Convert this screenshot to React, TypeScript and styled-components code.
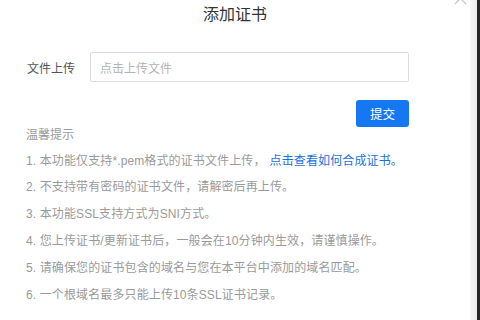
import styled, { createGlobalStyle } from "styled-components";

const GlobalStyle = createGlobalStyle`
    html, body {
        margin: 0;
        padding: 0;
        background: #ffffff;
    }
    body {
        font-family: "Liberation Sans", "Noto Sans CJK SC", sans-serif;
    }
`;

const Frame = styled.div`
    display: flex;
    width: 480px;
    height: 320px;
    overflow: hidden;
`;

const Modal = styled.div`
    position: relative;
    width: 470px;
    height: 100%;
    background: #ffffff;
`;

const Shade = styled.div`
    width: 7px;
    background: linear-gradient(to right, #f7f7f7, #ececec);
`;

const Mask = styled.div`
    flex: 1;
    background: #262626;
`;

const Close = styled.svg`
    position: absolute;
    top: -8px;
    right: 3px;
    width: 13px;
    height: 13px;
    stroke: #c8c8c8;
    stroke-width: 1.3;
`;

const Title = styled.h2`
    margin: 0;
    height: 30px;
    line-height: 30px;
    text-align: center;
    font-size: 16px;
    font-weight: normal;
    color: #333333;
`;

const Body = styled.div`
    width: 383px;
    padding-left: 26px;
`;

const FormRow = styled.div`
    display: flex;
    align-items: center;
    margin-top: 22px;
    gap: 15px;
`;

const Label = styled.span`
    width: 48px;
    padding-left: 1px;
    font-size: 12px;
    color: #555555;
    white-space: nowrap;
`;

const Upload = styled.div`
    flex: 1;
    height: 30px;
    box-sizing: border-box;
    border: 1px solid #dcdcdc;
    border-radius: 2px;
    padding-left: 9px;
    display: flex;
    align-items: center;
    font-size: 12px;
    color: #b4b4b4;
`;

const Actions = styled.div`
    display: flex;
    justify-content: flex-end;
    margin-top: 18px;
`;

const Submit = styled.button`
    width: 53px;
    height: 27px;
    border: none;
    border-radius: 3px;
    background: #1677f2;
    color: #ffffff;
    font-family: inherit;
    font-size: 12.5px;
    padding: 0;
`;

const TipsTitle = styled.div`
    height: 16px;
    line-height: 16px;
    font-size: 12px;
    color: #9a9a9a;
`;

const TipList = styled.ol`
    margin: 4.6px 0 0;
    padding: 0;
    list-style: none;
`;

const Tip = styled.li`
    line-height: 26.8px;
    font-size: 12px;
    letter-spacing: 0.12px;
    color: #9a9a9a;
    white-space: nowrap;
`;

const Link = styled.a`
    margin-left: 4px;
    color: #1c6fe0;
    text-decoration: none;
`;

const tips = [
    "2. 不支持带有密码的证书文件，请解密后再上传。",
    "3. 本功能SSL支持方式为SNI方式。",
    "4. 您上传证书/更新证书后，一般会在10分钟内生效，请谨慎操作。",
    "5. 请确保您的证书包含的域名与您在本平台中添加的域名匹配。",
    "6. 一个根域名最多只能上传10条SSL证书记录。",
];

const App = () => {
    return (
        <>
            <GlobalStyle />
            <Frame>
                <Modal>
                    <Close viewBox="0 0 13 13" fill="none">
                        <path d="M1 1 L12 12 M12 1 L1 12" />
                    </Close>
                    <Title>添加证书</Title>
                    <Body>
                        <FormRow>
                            <Label>文件上传</Label>
                            <Upload>点击上传文件</Upload>
                        </FormRow>
                        <Actions>
                            <Submit>提交</Submit>
                        </Actions>
                        <TipsTitle>温馨提示</TipsTitle>
                        <TipList>
                            <Tip>
                                1. 本功能仅支持*.pem格式的证书文件上传，
                                <Link href="#">点击查看如何合成证书。</Link>
                            </Tip>
                            {tips.map((t) => (
                                <Tip key={t}>{t}</Tip>
                            ))}
                        </TipList>
                    </Body>
                </Modal>
                <Shade />
                <Mask />
            </Frame>
        </>
    );
};

export default App;
